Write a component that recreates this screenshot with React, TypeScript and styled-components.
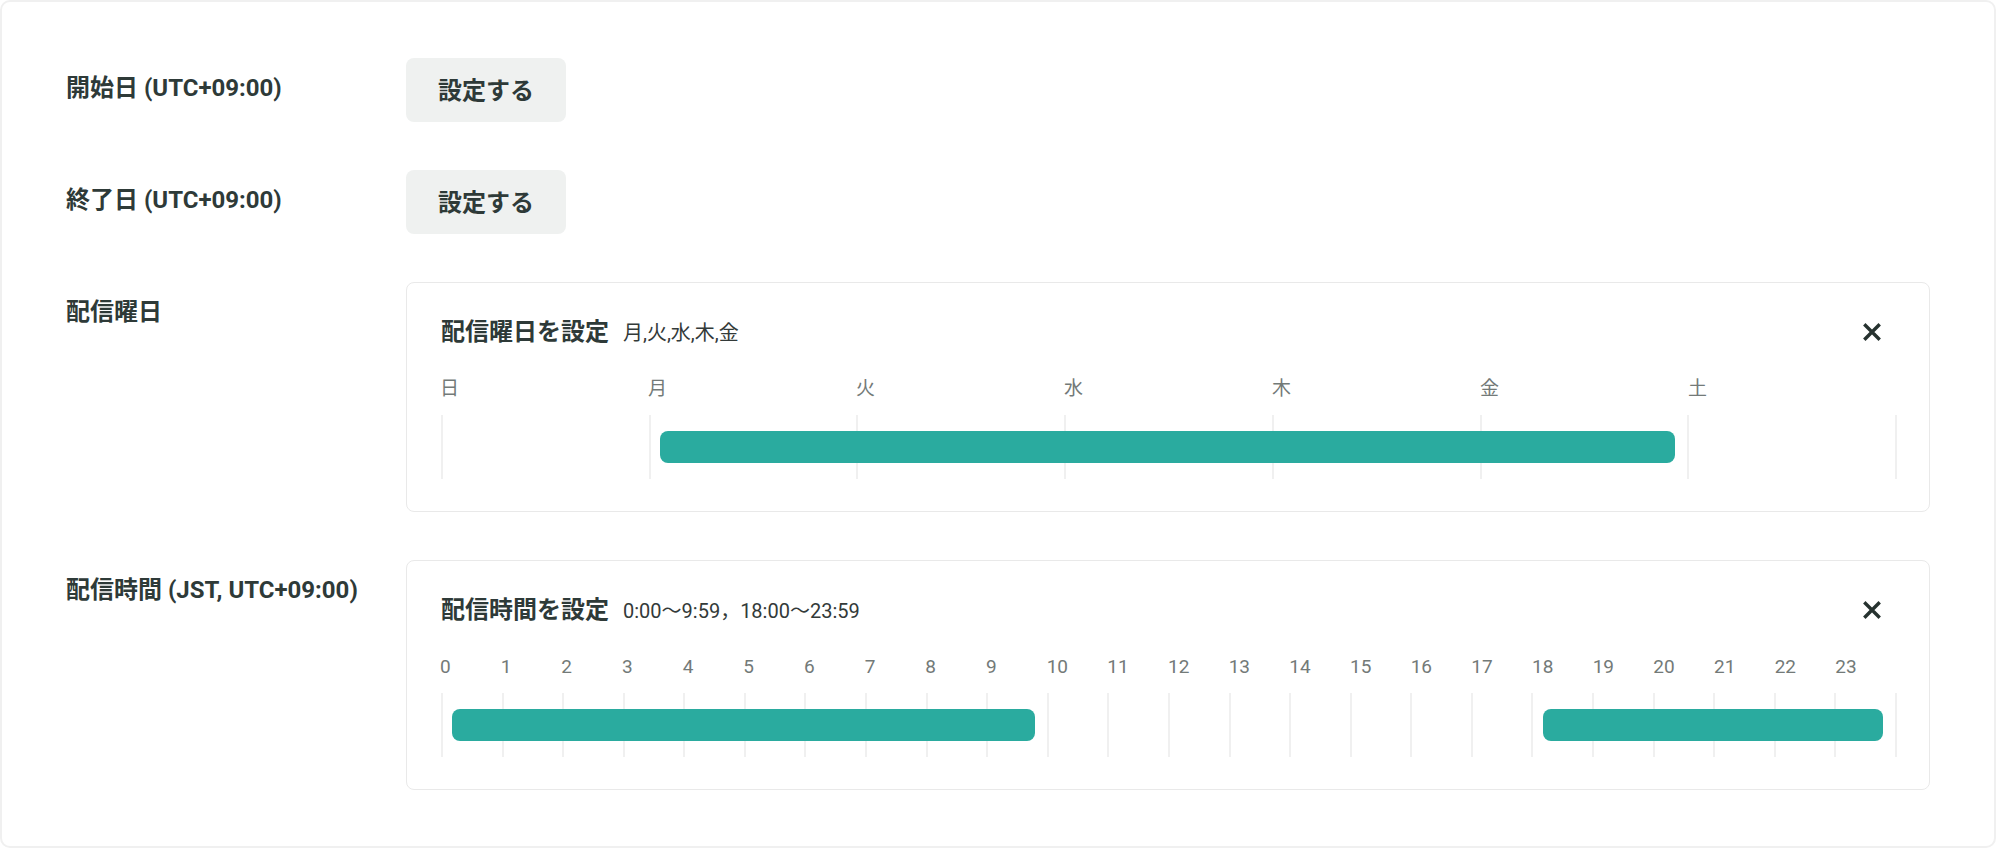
import styled, { createGlobalStyle } from 'styled-components';

const GlobalStyle = createGlobalStyle`
  html, body {
    margin: 0;
    padding: 0;
    background: #ffffff;
  }
  body {
    font-family: Roboto, "Noto Sans CJK JP", sans-serif;
    color: #2e3a38;
  }
`;

const DAYS = ['日', '月', '火', '水', '木', '金', '土'];
const HOURS = Array.from({ length: 24 }, (_, i) => String(i));

// ranges are in column units: [start, end)
const DAY_RANGES: [number, number][] = [[1, 6]];
const HOUR_RANGES: [number, number][] = [
  [0, 10],
  [18, 24],
];

const BAR_INSET_LEFT = 11;
const BAR_INSET_RIGHT = 12;

interface ScheduleCardProps {
  title: string;
  summary: string;
  labels: string[];
  ranges: [number, number][];
}

const CloseIcon = () => (
  <svg width="18" height="18" viewBox="0 0 18 18" aria-hidden="true">
    <path d="M2.5 2.5 L15.5 15.5 M15.5 2.5 L2.5 15.5" stroke="currentColor" strokeWidth="3.4" strokeLinecap="square" fill="none" />
  </svg>
);

const ScheduleCard = ({ title, summary, labels, ranges }: ScheduleCardProps) => {
  const count = labels.length;
  return (
    <Card>
      <CardHeader>
        <CardTitle>{title}</CardTitle>
        <CardSummary>{summary}</CardSummary>
        <CloseButton type="button" aria-label="閉じる">
          <CloseIcon />
        </CloseButton>
      </CardHeader>
      <AxisLabels $count={count}>
        {labels.map((l) => (
          <AxisLabel key={l}>{l}</AxisLabel>
        ))}
      </AxisLabels>
      <Track $count={count}>
        {labels.map((l) => (
          <TrackCell key={l} />
        ))}
        {ranges.map(([start, end]) => (
          <Bar
            key={`${start}-${end}`}
            style={{
              left: `calc(${(start / count) * 100}% + ${BAR_INSET_LEFT}px)`,
              width: `calc(${((end - start) / count) * 100}% - ${BAR_INSET_LEFT + BAR_INSET_RIGHT}px)`,
            }}
          />
        ))}
      </Track>
    </Card>
  );
};

const App = () => {
  return (
    <>
      <GlobalStyle />
      <Frame>
        <Form>
          <Row>
            <FieldLabel>開始日 (UTC+09:00)</FieldLabel>
            <div>
              <SetButton type="button">設定する</SetButton>
            </div>
          </Row>
          <Row>
            <FieldLabel>終了日 (UTC+09:00)</FieldLabel>
            <div>
              <SetButton type="button">設定する</SetButton>
            </div>
          </Row>
          <Row $top>
            <FieldLabel $top>配信曜日</FieldLabel>
            <ScheduleCard title="配信曜日を設定" summary="月,火,水,木,金" labels={DAYS} ranges={DAY_RANGES} />
          </Row>
          <Row $top>
            <FieldLabel $top>配信時間 (JST, UTC+09:00)</FieldLabel>
            <ScheduleCard
              title="配信時間を設定"
              summary="0:00〜9:59，18:00〜23:59"
              labels={HOURS}
              ranges={HOUR_RANGES}
            />
          </Row>
        </Form>
      </Frame>
    </>
  );
};

const Frame = styled.div`
  box-sizing: border-box;
  width: 1996px;
  height: 848px;
  border: 2px solid #f0f0f0;
  border-radius: 10px;
  background: #fff;
  overflow: hidden;
`;

const Form = styled.div`
  display: flex;
  flex-direction: column;
  gap: 48px;
  padding: 56px 64px 0 64px;
`;

const Row = styled.div<{ $top?: boolean }>`
  display: grid;
  grid-template-columns: 340px 1fr;
  align-items: ${(p) => (p.$top ? 'start' : 'center')};
`;

const FieldLabel = styled.div<{ $top?: boolean }>`
  font-size: 24px;
  font-weight: 700;
  line-height: 32px;
  color: #2e3a38;
  padding-top: ${(p) => (p.$top ? '14px' : '0')};
  margin-bottom: ${(p) => (p.$top ? '0' : '5px')};
`;

const SetButton = styled.button`
  height: 64px;
  padding: 0 32px 3px;
  border: none;
  border-radius: 8px;
  background: #eff1f0;
  color: #2e3a38;
  font-family: inherit;
  font-size: 24px;
  font-weight: 700;
  cursor: pointer;
`;

const Card = styled.div`
  box-sizing: border-box;
  border: 1px solid #e9e9e9;
  border-radius: 8px;
  padding: 32px 32px 32px 34px;
  background: #fff;
`;

const CardHeader = styled.div`
  display: flex;
  align-items: baseline;
  height: 34px;
  line-height: 34px;
`;

const CardTitle = styled.span`
  font-size: 24px;
  font-weight: 700;
  color: #2e3a38;
`;

const CardSummary = styled.span`
  margin-left: 14px;
  font-size: 20px;
  color: #333a39;
`;

const CloseButton = styled.button`
  margin-left: auto;
  align-self: center;
  width: 50px;
  height: 34px;
  padding: 0;
  border: none;
  background: none;
  color: #26322f;
  display: flex;
  align-items: center;
  justify-content: center;
  cursor: pointer;
`;

const AxisLabels = styled.div<{ $count: number }>`
  display: grid;
  grid-template-columns: repeat(${(p) => p.$count}, 1fr);
  margin-top: 28px;
  height: 24px;
  line-height: 24px;
`;

const AxisLabel = styled.span`
  font-size: 19px;
  color: #737a78;
  margin-left: -1px;
`;

const Track = styled.div<{ $count: number }>`
  position: relative;
  display: grid;
  grid-template-columns: repeat(${(p) => p.$count}, 1fr);
  margin-top: 14px;
  height: 64px;
  border-right: 2px solid #f0f0f0;
`;

const TrackCell = styled.div`
  border-left: 2px solid #f0f0f0;
`;

const Bar = styled.div`
  position: absolute;
  top: 16px;
  height: 32px;
  border-radius: 8px;
  background: #2aab9f;
`;

export default App;
